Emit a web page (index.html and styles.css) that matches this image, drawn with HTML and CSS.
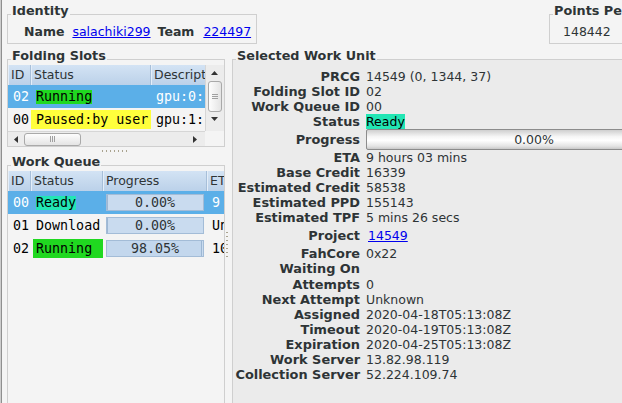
FILE: index.html
```html
<!DOCTYPE html>
<html lang="en">
<head>
<meta charset="utf-8">
<title>FAHControl</title>
<link rel="stylesheet" href="styles.css">
</head>
<body>
<div class="app">
  <header class="top">
    <section class="frame ident">
      <div class="ftitle">Identity</div>
      <div class="ident-row">
        <span class="lbl">Name</span>
        <a class="link" href="#">salachiki299</a>
        <span class="lbl">Team</span>
        <a class="link team" href="#">224497</a>
      </div>
    </section>
    <section class="frame points">
      <div class="ftitle">Points Per Day</div>
      <div class="points-val">148442</div>
    </section>
  </header>
  <main class="panes">
    <div class="left">
      <section class="frame slots">
        <div class="ftitle">Folding Slots</div>
        <div class="sw">
          <div class="sw-top">
            <div class="tree slots-tree">
              <div class="tr thead">
                <div class="th w-id">ID</div>
                <div class="th w-sst">Status</div>
                <div class="th w-desc">Description</div>
              </div>
              <div class="tr sel">
                <div class="td w-id">02</div>
                <div class="td w-sst"><span class="tag run">Running</span></div>
                <div class="td w-desc">gpu:0:</div>
              </div>
              <div class="tr">
                <div class="td w-id">00</div>
                <div class="td w-sst fillcell"><span class="fill paused">Paused:by user</span></div>
                <div class="td w-desc">gpu:1:</div>
              </div>
            </div>
            <div class="vscroll">
              <svg class="arr-v" width="7" height="4" viewBox="0 0 7 4"><polygon points="0,4 3.5,0 7,4" fill="#333"/></svg>
              <div class="vthumb"><span class="grip-h"></span></div>
              <svg class="arr-v arr-down" width="7" height="4" viewBox="0 0 7 4"><polygon points="0,0 7,0 3.5,4" fill="#333"/></svg>
            </div>
          </div>
          <div class="sw-bottom">
            <div class="hscroll">
              <svg width="4" height="7" viewBox="0 0 4 7"><polygon points="4,0 4,7 0,3.5" fill="#333"/></svg>
              <div class="hthumb"><span class="grip-v"></span></div>
              <svg class="arr-right" width="4" height="7" viewBox="0 0 4 7"><polygon points="0,0 4,3.5 0,7" fill="#333"/></svg>
            </div>
            <div class="corner"></div>
          </div>
        </div>
      </section>
      <div class="hhandle"><span class="dots-h"></span></div>
      <section class="frame queue">
        <div class="ftitle">Work Queue</div>
        <div class="tree queue-tree">
          <div class="tr thead">
            <div class="th w-id">ID</div>
            <div class="th w-qst">Status</div>
            <div class="th w-prog">Progress</div>
            <div class="th w-eta">ETA</div>
          </div>
          <div class="tr sel">
            <div class="td w-id">00</div>
            <div class="td w-qst"><span class="tag ready">Ready</span></div>
            <div class="td w-prog"><div class="pbar" style="--p:0%">0.00%</div></div>
            <div class="td w-eta">9 hours 03 mins</div>
          </div>
          <div class="tr">
            <div class="td w-id">01</div>
            <div class="td w-qst">Download</div>
            <div class="td w-prog"><div class="pbar" style="--p:0%">0.00%</div></div>
            <div class="td w-eta">Unknown</div>
          </div>
          <div class="tr">
            <div class="td w-id">02</div>
            <div class="td w-qst fillcell"><span class="fill run run2">Running</span></div>
            <div class="td w-prog"><div class="pbar" style="--p:98.05%">98.05%</div></div>
            <div class="td w-eta">10 mins 35 secs</div>
          </div>
        </div>
      </section>
    </div>
    <div class="vhandle"><span class="dots-v"></span></div>
    <div class="right">
      <section class="frame unit">
        <div class="ftitle">Selected Work Unit</div>
        <div class="details">
          <div class="k">PRCG</div><div class="v">14549 (0, 1344, 37)</div>
          <div class="k">Folding Slot ID</div><div class="v">02</div>
          <div class="k">Work Queue ID</div><div class="v">00</div>
          <div class="k">Status</div><div class="v"><span class="st-ready">Ready</span></div>
          <div class="k">Progress</div><div class="v"><div class="wu-bar">0.00%</div></div>
          <div class="k">ETA</div><div class="v">9 hours 03 mins</div>
          <div class="k">Base Credit</div><div class="v">16339</div>
          <div class="k">Estimated Credit</div><div class="v">58538</div>
          <div class="k">Estimated PPD</div><div class="v">155143</div>
          <div class="k">Estimated TPF</div><div class="v">5 mins 26 secs</div>
          <div class="k">Project</div><div class="v"><a class="link proj" href="#">14549</a></div>
          <div class="k">FahCore</div><div class="v">0x22</div>
          <div class="k">Waiting On</div><div class="v"></div>
          <div class="k">Attempts</div><div class="v">0</div>
          <div class="k">Next Attempt</div><div class="v">Unknown</div>
          <div class="k">Assigned</div><div class="v">2020-04-18T05:13:08Z</div>
          <div class="k">Timeout</div><div class="v">2020-04-19T05:13:08Z</div>
          <div class="k">Expiration</div><div class="v">2020-04-25T05:13:08Z</div>
          <div class="k">Work Server</div><div class="v">13.82.98.119</div>
          <div class="k">Collection Server</div><div class="v">52.224.109.74</div>
        </div>
      </section>
    </div>
  </main>
</div>
</body>
</html>
```

FILE: styles.css
```css
* { box-sizing: border-box; }
html, body { margin: 0; padding: 0; }
html { background: #f4f4f4; }
body {
  height: 403px;
  overflow: hidden;
  font-family: "DejaVu Sans", "Liberation Sans", sans-serif;
  font-size: 12.5px;
  color: #2e3436;
  background: #f4f4f4;
  border-left: 1px solid #cdcdcd;
}
.app {
  width: 621px;
  height: 403px;
  display: flex;
  flex-direction: column;
  border-left: 1px solid #8f8f8f;
  overflow: hidden;
}

/* frames */
.frame { border: 1px solid #cfcfcf; }
.ftitle {
  width: max-content;
  margin: -12px 0 0 3px;
  padding: 0 1px;
  font-weight: bold;
  font-size: 12.8px;
  line-height: 15px;
  white-space: nowrap;
  background: #f4f4f4;
}

/* top band */
.top {
  height: 48px;
  flex: none;
  display: flex;
  align-items: flex-start;
  padding: 14px 0 0 5px;
}
.ident { width: 250px; height: 30px; flex: none; }
.ident-row {
  display: flex;
  align-items: baseline;
  padding: 6px 0 0 16px;
  line-height: 15px;
  white-space: nowrap;
}
.lbl { font-weight: bold; }
.link { color: #0000ee; text-decoration: underline; }
.ident-row .link { margin: 0 7px 0 8px; }
.ident-row .link.team { margin-left: 9px; }
.points { width: 120px; height: 30px; flex: none; margin-left: 292px; }
.points-val { padding: 6px 0 0 13px; line-height: 15px; }

/* panes */
.panes { flex: 1; min-height: 0; display: flex; }
.left {
  width: 223px;
  flex: none;
  display: flex;
  flex-direction: column;
  padding: 11px 0 0 5px;
}
.slots { flex: none; height: 88px; }
.sw { margin-top: 2px; }
.sw-top { display: flex; height: 66px; }
.sw-bottom { display: flex; height: 15px; }

.tree { overflow: hidden; }
.slots-tree { width: 197px; flex: none; }
.queue-tree { width: 216px; margin-top: 2px; }
.tr { display: flex; height: 23px; white-space: nowrap; color: #000; }
.tr.thead { height: 20px; color: #2e3436; }
.th {
  flex: none;
  height: 100%;
  padding-left: 3px;
  line-height: 20px;
  overflow: hidden;
  background: linear-gradient(#d3e3f4, #bbd1e9);
  border-right: 1px solid #a7bfd9;
  box-shadow: inset 1px 0 #e4eef9;
}
.td {
  flex: none;
  height: 100%;
  padding-left: 5px;
  overflow: hidden;
  font-family: "DejaVu Sans Mono", "Liberation Mono", monospace;
  font-size: 13.33px;
  line-height: 23px;
}
.w-id { width: 23px; }
.w-sst { width: 120px; }
.w-desc { width: 200px; }
.w-qst { width: 72px; }
.w-prog { width: 104px; }
.w-eta { width: 120px; }

.sel { background: #5bafe8; color: #fff; }
.tag { display: inline-block; line-height: 14px; color: #000; vertical-align: middle; }
.run { background: #20d820; }
.ready { background: #22e6b4; }
.td.fillcell { padding-left: 0; }
.fill {
  display: block;
  height: 19px;
  margin: 2px 0;
  padding-left: 5px;
  line-height: 19px;
  color: #000;
}
.paused { background: #ffff3c; }
.run2 { margin-left: 2px; padding-left: 3px; }

.td.w-prog { padding: 3px 3px 3px 3px; }
.pbar {
  height: 17px;
  border: 1px solid #a3bcd7;
  line-height: 15px;
  text-align: center;
  color: #2e3436;
  background: linear-gradient(90deg, #c3d7ed var(--p), #9db7d3 var(--p), #9db7d3 calc(var(--p) + 1px), #c9dbef calc(var(--p) + 1px));
}

/* scrollbars */
.vscroll {
  width: 19px;
  flex: none;
  height: 66px;
  display: flex;
  flex-direction: column;
  padding: 6px 0 0 2px;
  background: #ececec;
  border-left: 1px solid #d6d6d6;
}
.arr-v { display: block; margin-left: 3px; }
.arr-down { margin-top: 5px; }
.vthumb {
  width: 14px;
  height: 31px;
  margin-top: 6px;
  border: 1px solid #a9a9a9;
  border-radius: 3px;
  background: linear-gradient(90deg, #fdfdfd, #e4e4e4);
  display: flex;
  align-items: center;
  justify-content: center;
}
.grip-h {
  width: 6px;
  height: 5px;
  background: repeating-linear-gradient(#a0a0a0 0 1px, transparent 1px 2px);
}
.hscroll {
  width: 197px;
  flex: none;
  height: 15px;
  display: flex;
  align-items: center;
  padding: 0 8px 0 6px;
  background: #ececec;
  border-top: 1px solid #d6d6d6;
}
.hscroll svg { display: block; flex: none; }
.hthumb {
  width: 57px;
  height: 13px;
  margin-left: 6px;
  border: 1px solid #a9a9a9;
  border-radius: 3px;
  background: linear-gradient(#fdfdfd, #e4e4e4);
  display: flex;
  align-items: center;
  justify-content: center;
}
.grip-v {
  width: 5px;
  height: 6px;
  background: repeating-linear-gradient(90deg, #a0a0a0 0 1px, transparent 1px 2px);
}
.arr-right { margin-left: auto; }
.corner { width: 19px; flex: none; background: #f4f4f4; }

/* handles */
.hhandle { height: 18px; flex: none; padding-top: 3px; }
.dots-h {
  display: block;
  width: 27px;
  height: 2px;
  margin-left: 95px;
  background: repeating-linear-gradient(90deg, #aaa38f 0 1px, transparent 1px 4px);
}
.queue { flex: 1; border-bottom: 0; }
.vhandle { width: 7px; flex: none; }
.dots-v {
  display: block;
  width: 2px;
  height: 28px;
  margin: 184px 0 0 1px;
  background: repeating-linear-gradient(#aaa38f 0 1px, transparent 1px 4px);
}

/* right pane */
.right { width: 480px; flex: none; padding-top: 11px; }
.unit {
  height: 100%;
  background: #ebebeb;
  border-right: 0;
  border-bottom: 0;
}
.unit .ftitle { background: linear-gradient(#f4f4f4 12px, #ebebeb 12px); }
.details {
  display: grid;
  grid-template-columns: 125px 336px;
  grid-template-rows: 15px 15px 15px 15px 21px 15px 15px 15px 15px 15px 21px 15px 16px repeat(7, 15px);
  column-gap: 6px;
  padding: 5.5px 0 0 2px;
  line-height: 15px;
  white-space: nowrap;
}
.k { font-weight: bold; font-size: 12.9px; text-align: right; align-self: center; }
.v { align-self: center; }
.st-ready { display: inline-block; background: #22e6b4; color: #000; }
.wu-bar {
  height: 21px;
  border: 1px solid #8c8c8c;
  border-radius: 2px;
  background: linear-gradient(#cfcfcf, #f6f6f6 35%, #ffffff 55%, #e4e4e4 85%, #c9c9c9);
  text-align: center;
  line-height: 19px;
}
.proj { margin-left: 2px; }
```
